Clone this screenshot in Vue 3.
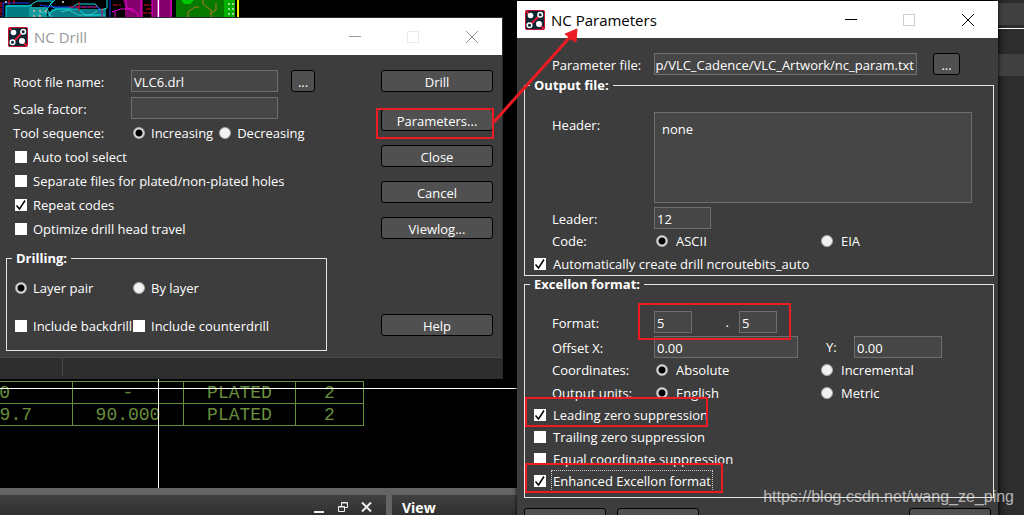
<script setup>
import { ref } from "vue";

const drill = ref({
  fileName: "VLC6.drl",
  scale: "",
  sequence: "Increasing",
  layers: "Layer pair",
});

const drillOptions = ref([
  { id: "auto-tool", label: "Auto tool select", checked: false },
  {
    id: "separate",
    label: "Separate files for plated/non-plated holes",
    checked: false,
  },
  { id: "repeat", label: "Repeat codes", checked: true },
  { id: "optimize", label: "Optimize drill head travel", checked: false },
]);

const layerOptions = ref([
  { id: "backdrill", label: "Include backdrill", checked: false },
  { id: "counterdrill", label: "Include counterdrill", checked: false },
]);

const params = ref({
  file: "top/VLC_Cadence/VLC_Artwork/nc_param.txt",
  header: "none",
  leader: "12",
  code: "ASCII",
  autoCreate: true,
  integer: "5",
  decimal: "5",
  offsetX: "0.00",
  offsetY: "0.00",
  coordinates: "Absolute",
  units: "English",
});

const suppression = ref([
  {
    id: "leading",
    label: "Leading zero suppression",
    checked: true,
    mark: "mark-leading",
  },
  { id: "trailing", label: "Trailing zero suppression", checked: false },
  { id: "equal", label: "Equal coordinate suppression", checked: false },
  {
    id: "enhanced",
    label: "Enhanced Excellon format",
    checked: true,
    focused: true,
    mark: "mark-enhanced",
  },
]);

const holes = [
  ["0", "-", "PLATED", "2"],
  ["9.7", "90.000", "PLATED", "2"],
];
</script>

<template>
  <div class="desktop">
    <div class="workspace">
      <svg class="board" viewBox="0 0 240 18" width="240" height="18">
        <rect x="6" y="5" width="26" height="13" fill="#007b80" />
        <rect x="29" y="7" width="18" height="11" fill="#149a9c" />
        <path d="M52 9h54v9H46z" fill="#087f88" />
        <g fill="none">
          <path
            d="M6 18V6h23l8-5h16l-6 8 5 9M55 0l-5 4 4 4h17l6-4h18l6 6 6-2V0M48 14l8-5h22l7 6h20"
            stroke="#00e5ee"
          />
          <path d="M3 18V3h27M40 5l12 2h46l4 6v5M110 0v18" stroke="#1440ff" />
          <path
            d="M1 2v14M9 0v5M14 0v4M69 7h28M79 2v9M102 8v10M113 5h8M144 5h8M146 9h6M142 13h10"
            stroke="#e80020"
            stroke-dasharray="5 1"
          />
          <path d="M61 12l8-2 9 5h13l6-4M38 16a6 4 0 0 1 12 0" stroke="#39c4c8" />
        </g>
        <path
          d="M33 10h2v2h-2zM39 10h2v2h-2zM45 10h2v2h-2zM33 15h2v2h-2zM39 15h2v2h-2zM5 1h2v2H5zM62 1h2v2h-2z"
          fill="#aaa"
        />
        <path d="M123 0h20v18h-18V6zM152 0h20v18h-20z" fill="#85006c" />
        <path
          d="M112 12l9-3h12l5 5v4M126 0v7l8 5M141 0v18M152 0v18M159 0v18M171 0v18M115 18v-7"
          fill="none"
          stroke="#f000d8"
        />
        <path d="M158 0v18" stroke="#e9a9dd" />
        <path d="M176 0h49v18h-49z" fill="#087900" />
        <path d="M224 0h11v18h-11z" fill="#00b000" />
        <path d="M181 0h13l-4 4h-6z" fill="#00c800" />
        <path
          d="M188 18v-6l7-5h4M203 0v4l8 6v8M216 3v7l-5 3"
          fill="none"
          stroke="#b47a20"
        />
        <path d="M238 0v18" stroke="#e6ef00" stroke-width="2" />
        <path
          d="M228 3h2v2h-2zM232 3h2v2h-2zM228 8h2v2h-2zM232 8h2v2h-2zM228 13h2v2h-2zM232 13h2v2h-2z"
          fill="#9ed89e"
        />
      </svg>

      <table class="holes">
        <tbody>
          <tr v-for="(row, i) in holes" :key="i">
            <td v-for="(cell, j) in row" :key="j">{{ cell }}</td>
          </tr>
        </tbody>
      </table>
      <div class="cross-h"></div>
      <div class="cross-v"></div>
      <div class="side-pane">
        <div class="side-band"></div>
        <div class="side-line"></div>
        <div class="side-band"></div>
      </div>
    </div>

    <div class="dock">
      <div class="dock-panel dock-tools">
        <svg width="60" height="14" viewBox="0 0 60 14" fill="none" stroke="#eee">
          <path d="M1 12h10" stroke-width="2" />
          <path d="M28.500 2.500h6v5h-6zM28 3h7" />
          <path d="M25.500 6.500h6v5h-6z" fill="#383838" />
          <path d="M25 7h7" />
          <path d="M49 2.500l9 9M58 2.500l-9 9" stroke-width="2" />
        </svg>
      </div>
      <div class="dock-panel dock-view">View</div>
    </div>

    <div class="windows">
      <section class="window drill">
        <header class="titlebar inactive">
          <svg class="logo" viewBox="0 0 20 20" width="20" height="20">
            <rect x="0.500" y="0.500" width="19" height="19" rx="1" fill="#0b2733" stroke="#c8102e" />
            <path d="M1 1l5 5M5 15L15 5M14 14l5 5" stroke="#e0183a" stroke-width="2" />
            <circle cx="5.500" cy="5.500" r="2.800" fill="#fff" />
            <circle cx="14" cy="14" r="3" fill="#fff" />
            <circle cx="15.200" cy="4.700" r="2.300" fill="#0b2733" stroke="#fff" stroke-width="1.500" />
            <circle cx="4.500" cy="15.200" r="2.300" fill="#0b2733" stroke="#fff" stroke-width="1.500" />
          </svg>
          <h1>NC Drill</h1>
          <svg class="controls" viewBox="0 0 130 14" width="130" height="14" fill="none">
            <path d="M0 6.500h12" stroke="#999" />
            <path d="M58.500 1.500h11v11h-11z" stroke="#e8e8e8" />
            <path d="M117 1l12 12M129 1l-12 12" stroke="#8c8c8c" />
          </svg>
        </header>

        <div class="drill-body">
          <div class="drill-main">
            <div class="drill-fields">
              <label for="root">Root file name:</label>
              <input id="root" v-model="drill.fileName" type="text" />
              <button type="button">...</button>
              <label for="scale">Scale factor:</label>
              <input id="scale" v-model="drill.scale" type="text" />
            </div>
            <div class="sequence">
              <span>Tool sequence:</span>
              <label v-for="s in ['Increasing', 'Decreasing']" :key="s" class="choice">
                <input v-model="drill.sequence" type="radio" name="sequence" :value="s" />
                <span>{{ s }}</span>
              </label>
            </div>
            <div class="drill-options">
              <label v-for="o in drillOptions" :key="o.id" class="choice">
                <input v-model="o.checked" type="checkbox" />
                <span>{{ o.label }}</span>
              </label>
            </div>
            <fieldset class="drilling">
              <legend>Drilling:</legend>
              <div class="pairs">
                <label v-for="l in ['Layer pair', 'By layer']" :key="l" class="choice">
                  <input v-model="drill.layers" type="radio" name="layers" :value="l" />
                  <span>{{ l }}</span>
                </label>
                <label v-for="o in layerOptions" :key="o.id" class="choice">
                  <input v-model="o.checked" type="checkbox" />
                  <span>{{ o.label }}</span>
                </label>
              </div>
            </fieldset>
          </div>

          <div class="drill-actions">
            <button type="button">Drill</button>
            <div class="marked">
              <button type="button">Parameters...</button>
              <span class="mark mark-button"></span>
            </div>
            <button type="button">Close</button>
            <button type="button">Cancel</button>
            <button type="button">Viewlog...</button>
            <button type="button" class="help">Help</button>
          </div>
        </div>
        <footer class="status"><span></span></footer>
      </section>

      <section class="window params">
        <header class="titlebar">
          <svg class="logo" viewBox="0 0 20 20" width="20" height="20">
            <rect x="0.500" y="0.500" width="19" height="19" rx="1" fill="#0b2733" stroke="#c8102e" />
            <path d="M1 1l5 5M5 15L15 5M14 14l5 5" stroke="#e0183a" stroke-width="2" />
            <circle cx="5.500" cy="5.500" r="2.800" fill="#fff" />
            <circle cx="14" cy="14" r="3" fill="#fff" />
            <circle cx="15.200" cy="4.700" r="2.300" fill="#0b2733" stroke="#fff" stroke-width="1.500" />
            <circle cx="4.500" cy="15.200" r="2.300" fill="#0b2733" stroke="#fff" stroke-width="1.500" />
          </svg>
          <h1>NC Parameters</h1>
          <svg class="controls" viewBox="0 0 130 14" width="130" height="14" fill="none">
            <path d="M0 6.500h12" stroke="#000" />
            <path d="M58.500 1.500h11v11h-11z" stroke="#ccc" />
            <path d="M117 1l12 12M129 1l-12 12" stroke="#000" />
          </svg>
        </header>

        <div class="params-body">
          <div class="file-row">
            <label for="file">Parameter file:</label>
            <input id="file" v-model="params.file" class="path" type="text" />
            <button type="button">...</button>
          </div>

          <fieldset>
            <legend>Output file:</legend>
            <div class="rows">
              <div class="row header-row">
                <label for="header">Header:</label>
                <textarea id="header" v-model="params.header"></textarea>
              </div>
              <div class="row">
                <label for="leader">Leader:</label>
                <input id="leader" v-model="params.leader" class="w-leader" type="text" />
              </div>
              <div class="row">
                <span>Code:</span>
                <label v-for="c in ['ASCII', 'EIA']" :key="c" class="choice wide">
                  <input v-model="params.code" type="radio" name="code" :value="c" />
                  <span>{{ c }}</span>
                </label>
              </div>
            </div>
            <label class="choice option">
              <input v-model="params.autoCreate" type="checkbox" />
              <span>Automatically create drill ncroutebits_auto</span>
            </label>
          </fieldset>

          <fieldset>
            <legend>Excellon format:</legend>
            <div class="rows">
              <div class="row format-row">
                <label for="integer">Format:</label>
                <div class="format">
                  <input id="integer" v-model="params.integer" class="w-digit" type="text" />
                  <label for="decimal">.</label>
                  <input id="decimal" v-model="params.decimal" class="w-digit" type="text" />
                  <span class="mark mark-format"></span>
                </div>
              </div>
              <div class="row">
                <label for="offset-x">Offset X:</label>
                <input id="offset-x" v-model="params.offsetX" class="w-offset" type="text" />
                <div class="offset-y">
                  <label for="offset-y">Y:</label>
                  <input id="offset-y" v-model="params.offsetY" type="text" />
                </div>
              </div>
              <div class="row">
                <span>Coordinates:</span>
                <label v-for="c in ['Absolute', 'Incremental']" :key="c" class="choice wide">
                  <input v-model="params.coordinates" type="radio" name="coordinates" :value="c" />
                  <span>{{ c }}</span>
                </label>
              </div>
              <div class="row">
                <span>Output units:</span>
                <label v-for="u in ['English', 'Metric']" :key="u" class="choice wide">
                  <input v-model="params.units" type="radio" name="units" :value="u" />
                  <span>{{ u }}</span>
                </label>
              </div>
            </div>
            <div class="suppression">
              <label v-for="s in suppression" :key="s.id" class="choice option marked">
                <input v-model="s.checked" type="checkbox" />
                <span :class="{ focused: s.focused }">{{ s.label }}</span>
                <span v-if="s.mark" class="mark" :class="s.mark"></span>
              </label>
            </div>
          </fieldset>

          <div class="params-actions">
            <button type="button"></button>
            <button type="button"></button>
            <button type="button" class="last"></button>
          </div>
        </div>
      </section>
    </div>

    <svg class="arrow" viewBox="0 0 1024 515" preserveAspectRatio="none">
      <path d="M494 122L570 37" stroke="#ed1c24" stroke-width="3" />
      <path d="M577 29l-12 5 4 3 3 3 4 2z" fill="#ed1c24" stroke="#ed1c24" />
    </svg>
    <div class="watermark">https://blog.csdn.net/wang_ze_ping</div>
  </div>
</template>

<style>
body {
  background: #000;
  overflow: hidden;
}
</style>

<style scoped>
.desktop {
  position: relative;
  display: flex;
  flex-direction: column;
  height: 100vh;
  overflow: hidden;
  color: #fff;
  background: #000;
  font-family: "Open Sans", "Noto Sans", sans-serif;
  font-size: 13px;
  line-height: 18px;
}

.desktop *,
.desktop *::before,
.desktop *::after {
  box-sizing: border-box;
}

/* canvas behind the dialogs */
.workspace {
  position: relative;
  flex: 1;
}

.board {
  position: absolute;
  top: 0;
  left: 0;
}

.holes {
  position: absolute;
  top: 381px;
  left: -40px;
  width: 404px;
  border-collapse: collapse;
  table-layout: fixed;
  color: #688e3c;
  font-family: "Liberation Mono", monospace;
  font-size: 18px;
  line-height: 19px;
  text-align: center;
}

.holes td {
  height: 22px;
  padding: 2px 0 0;
  border: 1px solid #688e3c;
}

.holes td:nth-child(1) {
  width: 112px;
  padding-right: 40px;
  text-align: right;
}

.holes tr:first-child td:first-child {
  padding-right: 62px;
}

.holes td:nth-child(2) {
  width: 111px;
}

.holes td:nth-child(3) {
  width: 112px;
}

.cross-h {
  position: absolute;
  top: 388px;
  left: 0;
  width: 100%;
  height: 1px;
  background: #fff;
}

.cross-v {
  position: absolute;
  top: 0;
  bottom: 0;
  left: 158px;
  width: 1px;
  background: #fff;
}

.side-pane {
  position: absolute;
  top: 0;
  right: 0;
  bottom: -27px;
  z-index: 1;
  width: 30px;
  padding-top: 3px;
  background: linear-gradient(90deg, #222 4px, #2d2d2d 14px);
}

.side-band {
  height: 22px;
  background: #404040;
}

.side-line {
  height: 1px;
  margin: 3px 0 25px;
  background: #fff;
}

.dock {
  display: flex;
  gap: 6px;
  height: 27px;
  padding-top: 7px;
  background: #646464;
}

.dock-panel {
  display: flex;
  align-items: center;
  background: linear-gradient(#404040, #303030);
}

.dock-tools {
  justify-content: flex-end;
  width: 386px;
  padding: 4px 13px 0 0;
}

.dock-view {
  flex: 1;
  padding: 5px 10px 0;
  font-size: 14px;
  font-weight: 700;
}

/* dialogs */
.windows {
  position: absolute;
  inset: 0;
  z-index: 2;
  display: grid;
  grid-template-columns: 503fr 14fr 481fr 26fr;
  align-items: start;
}

.window {
  background: #3d3d3d;
}

.drill {
  margin-top: 17px;
  border-top: 1px solid #2a2a2a;
  border-right: 1px solid #2a2a2a;
}

.params {
  grid-column: 3;
  margin-top: 1px;
  box-shadow: 0 0 4px #000;
}

.titlebar {
  display: flex;
  align-items: center;
  height: 37px;
  padding: 0 23px 0 8px;
  color: #000;
  background: #fff;
}

.titlebar.inactive {
  color: #999;
}

.titlebar h1 {
  margin: 0 auto 0 6px;
  font-size: 15px;
  font-weight: 400;
  line-height: 20px;
}

button {
  height: 22px;
  padding: 2px 0 0;
  border: 1px solid #000;
  border-radius: 3px;
  color: #fff;
  background: #505050;
  font: inherit;
  line-height: 18px;
}

input[type="text"],
textarea {
  width: 100%;
  min-width: 0;
  height: 22px;
  margin: 0;
  padding: 2px 2px 0;
  border: 1px solid #6e6e6e;
  border-radius: 0;
  outline: none;
  color: #fff;
  background: #464646;
  font: inherit;
}

input[type="radio"],
input[type="checkbox"] {
  flex: none;
  width: 12px;
  height: 12px;
  margin: 0;
  appearance: none;
  background: #fff;
}

input[type="radio"] {
  border: 1px solid #aaa;
  border-radius: 50%;
  background: #f2f2f2;
}

input[type="radio"]:checked {
  background: radial-gradient(circle, #000 3px, #ddd 4px);
}

input[type="checkbox"]:checked {
  background: #fff
    url("data:image/svg+xml,%3Csvg xmlns='http://www.w3.org/2000/svg' viewBox='0 0 12 12'%3E%3Cpath d='M1.500 6.500l3 3.500L10 1.500' fill='none' stroke='%23000' stroke-width='1.500'/%3E%3C/svg%3E");
}

.choice {
  display: flex;
  align-items: center;
  gap: 6px;
  height: 22px;
  white-space: nowrap;
}

fieldset {
  min-width: 0;
  margin: 0;
  padding: 0;
  border: 1px solid #e4e4e4;
}

legend {
  height: 17px;
  margin-left: 5px;
  padding: 0 4px;
  font-weight: 700;
  line-height: 17px;
}

.drill-body {
  display: grid;
  grid-template-columns: 1fr 112px;
  padding: 15px 9px 6px 6px;
}

.drill-fields {
  display: grid;
  grid-template-columns: 118px 147px 24px;
  gap: 5px 0;
  align-items: center;
  padding-left: 7px;
}

.drill-fields label,
.file-row label,
.row > label:first-child {
  padding-top: 2px;
}

.drill-fields button {
  margin-left: 13px;
  margin-right: -13px;
}

.sequence {
  display: flex;
  align-items: center;
  gap: 6px;
  height: 24px;
  margin-top: 2px;
  padding-left: 7px;
}

.sequence > span {
  width: 114px;
}

.drill-options {
  padding-left: 9px;
}

.drill-options .choice {
  height: 24px;
}

.drilling {
  width: 321px;
  margin-top: 9px;
}

.pairs {
  display: grid;
  grid-template-columns: 118px 1fr;
  gap: 16px 0;
  padding: 10px 0 13px 8px;
}

.drill-actions {
  display: flex;
  flex-direction: column;
  gap: 14px;
}

.drill-actions button {
  width: 100%;
}

.drill-actions .marked {
  padding-top: 3px;
}

.help {
  margin-top: auto;
  margin-bottom: 15px;
}

.status {
  height: 22px;
  border-top: 1px solid #4a4a4a;
  background: #2d2d2d;
}

.status span {
  display: block;
  width: 63px;
  height: 18px;
  border-right: 1px solid #4a4a4a;
}

.params-body {
  padding: 15px 4px 0 7px;
}

.file-row {
  display: grid;
  grid-template-columns: 102px 1fr 27px;
  align-items: center;
  margin-bottom: 2px;
  padding: 0 34px 0 28px;
}

/* keeps the end of a long path in view */
.file-row .path {
  width: auto;
  margin-right: 16px;
  padding-left: 0;
  direction: rtl;
}

.rows {
  padding: 18px 21px 0 27px;
}

.row {
  display: grid;
  grid-template-columns: 102px 165px 1fr;
  align-items: center;
  min-height: 22px;
  margin-bottom: 1px;
}

.header-row {
  grid-template-columns: 102px 1fr;
  align-items: start;
  margin-bottom: 4px;
}

.row.header-row > label {
  padding-top: 4px;
}

.header-row textarea {
  display: block;
  height: 91px;
  padding: 7px;
  resize: none;
}

.format-row {
  margin-bottom: 3px;
}

.row .w-leader {
  width: 57px;
}

.row .w-digit {
  width: 38px;
}

.row .w-offset {
  width: 144px;
}

.format {
  position: relative;
  display: flex;
  align-items: center;
  width: 123px;
}

.format label {
  flex: 1;
  padding-right: 10px;
  text-align: right;
}

.offset-y {
  display: grid;
  grid-template-columns: 28px 88px;
  align-items: center;
  padding-left: 7px;
}

.wide {
  gap: 8px;
  padding-left: 2px;
}

.option {
  gap: 7px;
  width: max-content;
  padding-left: 9px;
}

.suppression {
  margin-top: -1px;
  padding-bottom: 5px;
}

.focused {
  outline: 1px dotted #ccc;
  outline-offset: 1px;
}

.params-actions {
  display: grid;
  grid-template-columns: 82px 82px 1fr;
  gap: 11px;
  padding: 10px 3px 0 0;
}

.params-actions .last {
  width: 82px;
  justify-self: end;
}

/* red call-outs */
.marked {
  position: relative;
}

.mark {
  position: absolute;
  border: 2px solid #ed1c24;
  pointer-events: none;
}

.mark-button {
  inset: 2px -1px -8px -5px;
}

.mark-format {
  inset: -8px -14px -7px -16px;
}

.mark-leading {
  inset: -7px 0 -1px 0;
}

.mark-enhanced {
  inset: -7px -12px -1px 0;
}

.arrow {
  position: absolute;
  inset: 0;
  z-index: 3;
  width: 100%;
  height: 100%;
  pointer-events: none;
}

.watermark {
  position: absolute;
  right: 10px;
  bottom: 8px;
  z-index: 3;
  color: rgba(255, 255, 255, 0.65);
  font-family: "Liberation Sans", Arial, sans-serif;
  font-size: 16px;
  line-height: 20px;
}
</style>
